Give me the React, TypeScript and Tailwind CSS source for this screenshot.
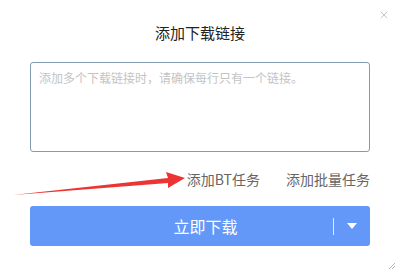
import { X } from "lucide-react";

const font = { fontFamily: '"Noto Sans CJK SC", "Noto Sans", sans-serif' };

export default function App() {
  return (
    <div className="relative h-[276px] w-[400px] overflow-hidden bg-white" style={font}>
      <button className="absolute right-[10px] top-[9px] text-[#a5a5a5]" aria-label="close">
        <X className="h-[12px] w-[12px]" strokeWidth={1.3} />
      </button>

      <div className="flex flex-col px-[30px]">
        <h1 className="pt-[22px] text-center text-[15px] leading-[22px] text-[#222]">添加下载链接</h1>

        <div className="mt-[18px] h-[90px] rounded-[3px] border border-[#7f9db3] px-[8px] pt-[6px]">
          <p className="text-[12px] leading-[18px] text-[#c4c4c4]">
            添加多个下载链接时，请确保每行只有一个链接。
          </p>
        </div>

        <div className="mt-[17px] flex justify-end gap-[26px] text-[14px] leading-[20px] text-[#666]">
          <span>添加BT任务</span>
          <span>添加批量任务</span>
        </div>

        <div className="mt-[17px] flex h-[40px] items-center rounded-[3px] bg-[#6398f8] text-white">
          <span className="flex-1 pl-[48px] text-center text-[16px]">立即下载</span>
          <span className="h-[17px] w-px bg-white/80" />
          <span className="flex w-[36px] justify-center">
            <svg width="10" height="6" viewBox="0 0 10 6">
              <path d="M0 0h10L5 6z" fill="white" />
            </svg>
          </span>
        </div>
      </div>

      <svg className="pointer-events-none absolute left-0 top-0" width="400" height="276">
        <polygon points="13,195 168,178 166,172 185,178 168,188 168,183" fill="#ec3434" />
      </svg>

      <svg className="absolute bottom-[6px] right-[4px]" width="10" height="10" viewBox="0 0 10 10">
        <path d="M9 3 3 9M9 6 6 9" stroke="#b5b5b5" strokeWidth="1" />
      </svg>
    </div>
  );
}
